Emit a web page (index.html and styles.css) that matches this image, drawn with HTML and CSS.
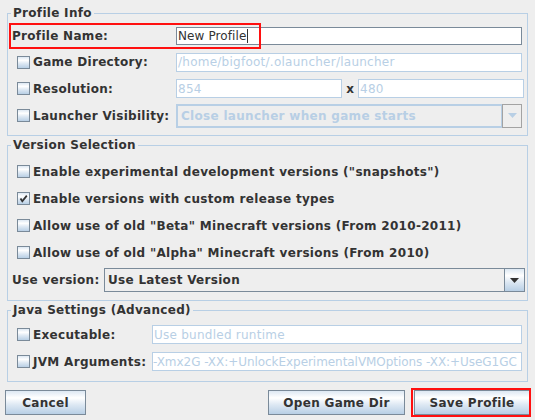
FILE: index.html
```html
<!DOCTYPE html>
<html>
<head>
<meta charset="utf-8">
<link rel="stylesheet" href="styles.css">
</head>
<body>
<div class="dialog">
  <fieldset class="group group-profile">
    <legend class="group-title">Profile Info</legend>
    <div class="row row-name cols-profile">
      <div class="cell-label"><span class="label label-indent">Profile Name:</span></div>
      <div class="field field-active field-name"><span class="field-text">New Profile</span><span class="caret"></span></div>
      <span class="highlight highlight-name"></span>
    </div>
    <div class="row row-26 cols-profile">
      <div class="cell-label"><span class="check"></span><span class="label">Game Directory:</span></div>
      <div class="field field-disabled"><span class="field-text">/home/bigfoot/.olauncher/launcher</span></div>
    </div>
    <div class="row row-27 cols-profile">
      <div class="cell-label"><span class="check"></span><span class="label">Resolution:</span></div>
      <div class="res-pair">
        <div class="field field-disabled field-res"><span class="field-text">854</span></div>
        <span class="res-x">x</span>
        <div class="field field-disabled field-res"><span class="field-text">480</span></div>
      </div>
    </div>
    <div class="row row-27 cols-profile">
      <div class="cell-label"><span class="check"></span><span class="label">Launcher Visibility:</span></div>
      <div class="combo combo-disabled">
        <span class="combo-text">Close launcher when game starts</span>
        <span class="combo-arrow"><svg width="9" height="5" viewBox="0 0 9 5"><path d="M0 0H9L4.5 5Z" fill="#b8cfe5"/></svg></span>
      </div>
    </div>
  </fieldset>

  <fieldset class="group group-version">
    <legend class="group-title">Version Selection</legend>
    <div class="row row-27 row-check"><span class="check"></span><span class="label">Enable experimental development versions ("snapshots")</span></div>
    <div class="row row-27 row-check"><span class="check check-on"><svg width="11" height="11" viewBox="0 0 11 11"><path d="M2.5 5.5L4.3 8.3L8.8 2.6" fill="none" stroke="#333" stroke-width="1.8"/></svg></span><span class="label">Enable versions with custom release types</span></div>
    <div class="row row-27 row-check"><span class="check"></span><span class="label">Allow use of old "Beta" Minecraft versions (From 2010-2011)</span></div>
    <div class="row row-27 row-check"><span class="check"></span><span class="label">Allow use of old "Alpha" Minecraft versions (From 2010)</span></div>
    <div class="row row-28 row-use">
      <span class="label label-indent label-use">Use version:</span>
      <div class="combo combo-enabled">
        <span class="combo-text">Use Latest Version</span>
        <span class="combo-arrow"><svg width="9" height="5" viewBox="0 0 9 5"><path d="M0 0H9L4.5 5Z" fill="#333"/></svg></span>
      </div>
    </div>
  </fieldset>

  <fieldset class="group group-java">
    <legend class="group-title">Java Settings (Advanced)</legend>
    <div class="row row-27 cols-java">
      <div class="cell-label"><span class="check"></span><span class="label">Executable:</span></div>
      <div class="field field-disabled"><span class="field-text">Use bundled runtime</span></div>
    </div>
    <div class="row row-27 cols-java">
      <div class="cell-label"><span class="check"></span><span class="label">JVM Arguments:</span></div>
      <div class="field field-disabled field-jvm"><span class="field-text">-Xmx2G -XX:+UnlockExperimentalVMOptions -XX:+UseG1GC</span></div>
    </div>
  </fieldset>

  <div class="buttons">
    <button class="btn btn-cancel">Cancel</button>
    <span class="spacer"></span>
    <button class="btn btn-open">Open Game Dir</button>
    <button class="btn btn-save">Save Profile<span class="highlight highlight-save"></span></button>
  </div>
</div>
</body>
</html>
```

FILE: styles.css
```css
* { box-sizing: border-box; }
html, body {
  margin: 0;
  padding: 0;
  background: #eeeeee;
}
body {
  width: 535px;
  height: 420px;
  overflow: hidden;
  font-family: "DejaVu Sans", sans-serif;
  font-size: 12px;
  color: #333333;
}
.dialog {
  padding: 6px 7px 0 7px;
}
.group {
  margin: 0;
  padding: 0 5px 0 0;
  border: 1px solid #b8cfe5;
  min-width: 0;
}
.group-title {
  margin-left: 3px;
  padding: 0 2px;
  font-weight: bold;
  letter-spacing: 0.3px;
  line-height: 14px;
  height: 14px;
}
.group-profile { padding-top: 3px; padding-bottom: 6px; }
.group-version { margin-top: 2px; padding-top: 6px; padding-bottom: 6px; padding-right: 2px; }
.group-java { margin-top: 2px; padding-top: 4px; padding-bottom: 6px; }

.row {
  position: relative;
  display: flex;
  align-items: center;
}
.row-name { height: 26px; }
.row-26 { height: 26px; }
.row-27 { height: 27px; }
.row-28 { height: 28px; }

.cols-profile, .cols-java {
  display: grid;
  align-items: center;
}
.cols-profile { grid-template-columns: 168px 1fr; }
.cols-java { grid-template-columns: 144px 1fr; }

.cell-label {
  display: flex;
  align-items: center;
  white-space: nowrap;
}
.label {
  font-weight: bold;
  letter-spacing: 0.3px;
  white-space: nowrap;
  line-height: 14px;
}
.label-indent { margin-left: 4px; }

.check {
  flex: none;
  width: 13px;
  height: 13px;
  margin-left: 9px;
  margin-right: 3px;
  border: 1px solid #7a8a99;
  background: linear-gradient(#dde8f3 0%, #ffffff 30%, #dde8f3 60%, #b8cfe5 100%);
  display: flex;
  align-items: center;
  justify-content: center;
}
.check svg { display: block; }

.field {
  height: 19px;
  border: 1px solid #b8cfe5;
  background: #ffffff;
  display: flex;
  align-items: center;
  padding-left: 1px;
  overflow: hidden;
  white-space: nowrap;
}
.field-active { border-color: #7a8a99; height: 18px; }
.field-disabled { color: #b8cfe5; }
.field-text { line-height: 14px; letter-spacing: 0.25px; }
.field-name .field-text { letter-spacing: 0.1px; }
.field-jvm { padding-left: 0; }
.field-jvm .field-text { letter-spacing: -0.05px; }
.caret {
  width: 1px;
  height: 14px;
  background: #333;
  margin-left: 1px;
}

.res-pair {
  display: flex;
  align-items: center;
}
.field-res { width: 166px; }
.res-x {
  font-weight: bold;
  width: 16px;
  text-align: center;
  line-height: 14px;
}
.res-pair .field-res:last-child { flex: 1; }

.combo {
  height: 24px;
  display: flex;
  align-items: stretch;
}
.combo-text {
  flex: 1;
  display: flex;
  align-items: center;
  padding-left: 3px;
  font-weight: bold;
  letter-spacing: 0.3px;
  white-space: nowrap;
  background: #eeeeee;
}
.combo-arrow {
  width: 20px;
  display: flex;
  align-items: center;
  justify-content: center;
}
.combo-disabled .combo-text {
  color: #b8cfe5;
  border: 2px solid #b8cfe5;
  border-right-width: 1px;
}
.combo-disabled .combo-arrow {
  border: 1px solid #a3a3a3;
}
.combo-enabled {
  flex: 1;
  border: 1px solid #7a8a99;
}
.combo-enabled .combo-text {
  border-right: 1px solid #7a8a99;
}
.combo-enabled .combo-arrow {
  width: 19px;
  background: linear-gradient(#dde8f3 0%, #ffffff 30%, #dde8f3 60%, #b8cfe5 100%);
}
.label-use { width: 92px; flex: none; }

.highlight {
  position: absolute;
  border: 2px solid #ff1010;
  pointer-events: none;
}
.highlight-name {
  left: 1px;
  top: 0;
  width: 252px;
  height: 26px;
}
.highlight-save {
  left: -4px;
  top: -3px;
  right: -2px;
  bottom: -3px;
}

.buttons {
  display: flex;
  margin: 8px -2px 0 -2px;
  align-items: center;
}
.spacer { flex: 1; }
.btn {
  position: relative;
  height: 25px;
  border: 1px solid #7a8a99;
  background: linear-gradient(#dde8f3 0%, #ffffff 30%, #dde8f3 60%, #b8cfe5 100%);
  font-family: "DejaVu Sans", sans-serif;
  font-size: 12px;
  font-weight: bold;
  letter-spacing: 0.3px;
  color: #333333;
  padding: 0;
  margin: 0;
}
.btn-cancel { width: 81px; }
.btn-open { width: 137px; }
.btn-save { width: 116px; margin-left: 9px; }
```
